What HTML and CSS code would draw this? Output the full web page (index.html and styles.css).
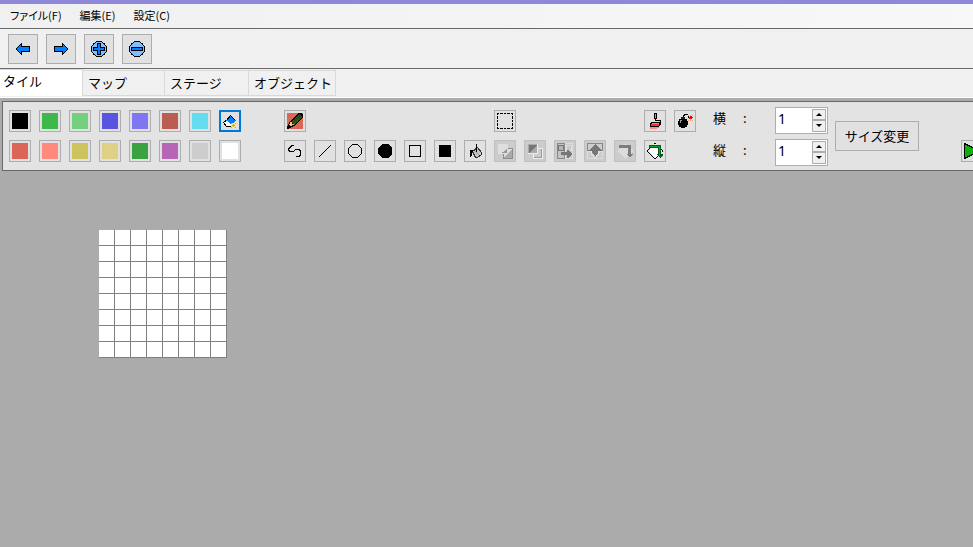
FILE: index.html
```
<!DOCTYPE html>
<html lang="ja">
<head>
    <meta charset="UTF-8">
    <meta name="viewport" content="width=device-width, initial-scale=1.0">
    <title>タイル</title>
    <link rel="stylesheet" href="styles.css">
</head>
<body>
    <nav class="menu-bar">
        <button class="menu-item">ファイル(F)</button>
        <button class="menu-item">編集(E)</button>
        <button class="menu-item">設定(C)</button>
    </nav>

    <div class="toolbar">
        <button class="main-btn" aria-label="戻る">
            <svg class="icon" viewBox="0 0 16 16"><path d="M1.5 7.5L6.5 2.5V5.5H14.5V10.5H6.5V13.5L1.5 8.5Z" fill="#0080ff" stroke="#000"/></svg>
        </button>
        <button class="main-btn" aria-label="進む">
            <svg class="icon" viewBox="0 0 16 16"><path d="M14.5 7.5L9.5 2.5V5.5H1.5V10.5H9.5V13.5L14.5 8.5Z" fill="#0080ff" stroke="#000"/></svg>
        </button>
        <button class="main-btn" aria-label="拡大">
            <svg class="icon" viewBox="0 0 16 16"><circle cx="8" cy="8" r="7.5" fill="#80bfff" stroke="#000"/><path d="M6.5 2.5H9.5V6.5H13.5V9.5H9.5V13.5H6.5V9.5H2.5V6.5H6.5Z" fill="#0080ff" stroke="#000"/></svg>
        </button>
        <button class="main-btn" aria-label="縮小">
            <svg class="icon" viewBox="0 0 16 16"><circle cx="8" cy="8" r="7.5" fill="#80bfff" stroke="#000"/><path d="M2.5 6.5H13.5V9.5H2.5Z" fill="#0080ff" stroke="#000"/></svg>
        </button>
    </div>

    <div class="tabs" role="tablist">
        <button class="tab active" role="tab">タイル</button>
        <button class="tab" role="tab">マップ</button>
        <button class="tab" role="tab">ステージ</button>
        <button class="tab" role="tab">オブジェクト</button>
    </div>

    <main class="tab-content">
        <div class="panel">
            <div class="palette">
                <button class="tool-btn" aria-label="黒"><span class="swatch black"></span></button>
                <button class="tool-btn" aria-label="緑"><span class="swatch green"></span></button>
                <button class="tool-btn" aria-label="薄緑"><span class="swatch light-green"></span></button>
                <button class="tool-btn" aria-label="青"><span class="swatch blue"></span></button>
                <button class="tool-btn" aria-label="薄青"><span class="swatch light-blue"></span></button>
                <button class="tool-btn" aria-label="暗い赤"><span class="swatch dark-red"></span></button>
                <button class="tool-btn" aria-label="水色"><span class="swatch cyan"></span></button>
                <button class="tool-btn selected" aria-label="消しゴム">
                    <svg class="icon" viewBox="0 0 16 16">
                        <path d="M1.5 9.5L5.5 6.5L10.5 12.5L8.5 13.5H4.5Z" fill="#fff" stroke="#000"/>
                        <path d="M8.5 2.5L13.5 7.5L9.5 12.5L4.5 7.5Z" fill="#0080ff"/>
                        <path d="M4.5 7.5L8.5 2.5L13.5 7.5" fill="none" stroke="#000"/>
                        <path d="M9 10H14V15H9Z" fill="#ffe96b"/>
                        <path d="M9 10h1v1h-1zM13 10h1v1h-1zM9 14h1v1h-1zM13 14h1v1h-1zM11 11h1v3h-1zM10 12h3v1h-3z" fill="#ff9a00"/>
                    </svg>
                </button>
                <button class="tool-btn" aria-label="赤"><span class="swatch red"></span></button>
                <button class="tool-btn" aria-label="薄赤"><span class="swatch light-red"></span></button>
                <button class="tool-btn" aria-label="黄"><span class="swatch yellow"></span></button>
                <button class="tool-btn" aria-label="薄黄"><span class="swatch light-yellow"></span></button>
                <button class="tool-btn" aria-label="暗い緑"><span class="swatch dark-green"></span></button>
                <button class="tool-btn" aria-label="紫"><span class="swatch magenta"></span></button>
                <button class="tool-btn" aria-label="灰"><span class="swatch gray"></span></button>
                <button class="tool-btn" aria-label="白"><span class="swatch white"></span></button>
            </div>

            <div class="tools">
                <div class="tool-row">
                    <button class="tool-btn" aria-label="ペン">
                        <svg class="icon" viewBox="0 0 16 16">
                            <path d="M0 0H16V16H0Z" fill="#db665a"/>
                            <path d="M11 0H15V1H16V5H15V6H14V7H13V8H12V9H11V10H10V11H9V12H8V13H6V14H4V15H2V16H0V13H1V11H2V9H3V8H4V7H5V6H6V5H7V4H8V3H9V2H10V1H11Z" fill="#000"/>
                            <path d="M4 9L12 1L15 4L7 12Z" fill="#264d10"/>
                            <path d="M5 9L12 2M7 11L14 4" fill="none" stroke="#3c6a1c" stroke-dasharray="1 1"/>
                            <path d="M3 9H5V11H7V12H5V13H3V12H2V11H3Z" fill="#ffb98c"/>
                        </svg>
                    </button>
                    <button class="tool-btn select-tool" aria-label="選択">
                        <svg class="icon" viewBox="0 0 16 16"><path d="M0 .5H16M0 15.5H16M.5 0V16M15.5 0V16" fill="none" stroke="#000" stroke-dasharray="2 1 3 1 2 1 3 1 2"/></svg>
                    </button>
                    <button class="tool-btn stamp-tool" aria-label="ローラー">
                        <svg class="icon" viewBox="0 0 16 16">
                            <path d="M7 0H10V6H7Z" fill="#000"/>
                            <path d="M8 1H9V5H8Z" fill="#ff8c1a"/>
                            <path d="M8.5 6V7.5H13.5V10.5H12" fill="none" stroke="#000"/>
                            <path d="M3 14H12V15H10V16H3Z" fill="#ff8c8c"/>
                            <path d="M4 9H13V10H14V12H13V13H12V14H3V10H4Z" fill="#000"/>
                            <path d="M5 10H12V11H5Z" fill="#ff8080"/>
                            <path d="M4 11H12V13H4Z" fill="#ff2c2c"/>
                        </svg>
                    </button>
                    <button class="tool-btn" aria-label="爆弾">
                        <svg class="icon" viewBox="0 0 16 16">
                            <circle cx="6" cy="10" r="5" fill="#000"/>
                            <path d="M4 4H8V6H4Z" fill="#222"/>
                            <path d="M3 7H5V8H4V10H3Z" fill="#999"/>
                            <path d="M6.5 4V2.5L8.5 1.5L11 2V4H12" fill="none" stroke="#000"/>
                            <path d="M11 2h1v1h-1zM15 2h1v1h-1zM11 7h1v1h-1zM15 7h1v1h-1zM13 2h1v6h-1z" fill="#ff9c6b"/>
                            <path d="M12 4H13V3H15V4H16V5H15V6H12Z" fill="#f00"/>
                        </svg>
                    </button>
                </div>
                <div class="tool-row">
                    <button class="tool-btn" aria-label="自由線">
                        <svg class="icon" viewBox="0 0 16 16"><path d="M7 2.5H4.5L3.5 4.5L1.5 5.5V7.5L3.5 8.5H6.5L8.5 6.5H12.5L13.5 8.5V11.5L12.5 13.5H9" fill="none" stroke="#000"/></svg>
                    </button>
                    <button class="tool-btn" aria-label="直線">
                        <svg class="icon" viewBox="0 0 16 16"><path d="M2 14L14 2" stroke="#000"/></svg>
                    </button>
                    <button class="tool-btn" aria-label="円">
                        <svg class="icon" viewBox="0 0 16 16"><path d="M5.5 1.5H10.5L14.5 5.5V10.5L10.5 14.5H5.5L1.5 10.5V5.5Z" fill="none" stroke="#000"/></svg>
                    </button>
                    <button class="tool-btn" aria-label="塗り円">
                        <svg class="icon" viewBox="0 0 16 16"><path d="M5 1H11L15 5V11L11 15H5L1 11V5Z" fill="#000"/></svg>
                    </button>
                    <button class="tool-btn" aria-label="四角">
                        <svg class="icon" viewBox="0 0 16 16"><path d="M2.5 2.5H13.5V13.5H2.5Z" fill="none" stroke="#000"/></svg>
                    </button>
                    <button class="tool-btn" aria-label="塗り四角">
                        <svg class="icon" viewBox="0 0 16 16"><path d="M2 2H14V14H2Z" fill="#000"/></svg>
                    </button>
                    <button class="tool-btn" aria-label="塗りつぶし">
                        <svg class="icon" viewBox="0 0 16 16">
                            <path d="M5.5 8.5L10.5 4.5L14.5 9.5V11.5L10.5 14.5H8.5Z" fill="#c4c4c4" stroke="#333"/>
                            <path d="M8 8L12 12" stroke="#999"/>
                            <path d="M9 1H10V9H9ZM3 7H6V9H5V13H4V14H3Z" fill="#000"/>
                        </svg>
                    </button>
                    <button class="tool-btn" aria-label="前面へ" disabled>
                        <svg class="icon" viewBox="0 0 16 16">
                            <path d="M6.5 5.5H15.5V15.5H6.5Z" fill="#ddd" stroke="#8c8c8c"/>
                            <path d="M15 6V15H7Z" fill="#aaa"/>
                            <path d="M1 1H11V11H1Z" fill="#dedede"/>
                            <path d="M10 5V10H3L7 9Z" fill="#999"/>
                        </svg>
                    </button>
                    <button class="tool-btn" aria-label="背面へ" disabled>
                        <svg class="icon" viewBox="0 0 16 16">
                            <path d="M6.5 5.5H15.5V15.5H6.5Z" fill="#ccc" stroke="#eee"/>
                            <path d="M14.5 6V14.5H7" fill="none" stroke="#999"/>
                            <path d="M1 1H10V10H1Z" fill="#aaa"/>
                            <path d="M2 2H10L2 10Z" fill="#777"/>
                            <path d="M1 10.5H10.5V1" fill="none" stroke="#eee"/>
                        </svg>
                    </button>
                    <button class="tool-btn" aria-label="左右反転" disabled>
                        <svg class="icon" viewBox="0 0 16 16">
                            <path d="M.5 .5H7.5V15.5H.5Z" fill="#c4c4c4" stroke="#888"/>
                            <path d="M8.5 .5H15.5V15.5H8.5Z" fill="#c9c9c9" stroke="#ddd"/>
                            <circle cx="4" cy="5" r="3" fill="#b4b4b4" stroke="#777"/>
                            <circle cx="12" cy="5" r="3" fill="none" stroke="#ddd"/>
                            <path d="M4 9H10V7H11L15 11L11 15H10V12H4Z" fill="#777"/>
                        </svg>
                    </button>
                    <button class="tool-btn" aria-label="上下反転" disabled>
                        <svg class="icon" viewBox="0 0 16 16">
                            <path d="M.5 .5H15.5V7.5H.5Z" fill="#ccc" stroke="#888"/>
                            <path d="M.5 8.5H15.5V15.5H.5Z" fill="#ccc" stroke="#ddd"/>
                            <path d="M3 9H13L8 15Z" fill="#bbb" stroke="#e2e2e2"/>
                            <path d="M8 1L15 8H11V10L8 13L5 10V8H1Z" fill="#777"/>
                        </svg>
                    </button>
                    <button class="tool-btn" aria-label="右回転" disabled>
                        <svg class="icon" viewBox="0 0 16 16">
                            <path d="M8 0L16 8L8 16L0 8Z" fill="#dcdcdc"/>
                            <path d="M2 2H14V11H16L13 15L10 11H11V5H2Z" fill="#7d7d7d"/>
                        </svg>
                    </button>
                    <button class="tool-btn" aria-label="回転">
                        <svg class="icon" viewBox="0 0 16 16">
                            <path d="M8 1L15 8L8 15L1 8Z" fill="#fff"/>
                            <path d="M7 0h2v1h-2zM5 2h1v1h-1zM3 4h1v1h-1zM2 5h1v1h-1zM1 6h1v1h-1zM0 7h1v2h-1zM1 9h1v1h-1zM2 10h1v1h-1zM3 11h1v1h-1zM4 12h1v1h-1zM5 13h1v1h-1zM6 14h1v1h-1zM7 15h2v1h-2zM9 14h1v1h-1zM10 13h1v1h-1zM14 6h1v1h-1zM15 7h1v2h-1z" fill="#000"/>
                            <path d="M2 2H13L14 3V11H16V12L13 15L10 12V11H11V5H2Z" fill="#075c1b"/>
                            <path d="M3 3H13V13H12V4H3Z" fill="#00a51f"/>
                        </svg>
                    </button>
                </div>
            </div>

            <div class="size-form">
                <label for="size-x">横</label><span>:</span>
                <div class="spin-box">
                    <input type="number" id="size-x" value="1" min="1">
                    <div class="spin-buttons">
                        <button class="spin-btn up" aria-label="横を増やす"></button>
                        <button class="spin-btn down" aria-label="横を減らす"></button>
                    </div>
                </div>
                <label for="size-y">縦</label><span>:</span>
                <div class="spin-box">
                    <input type="number" id="size-y" value="1" min="1">
                    <div class="spin-buttons">
                        <button class="spin-btn up" aria-label="縦を増やす"></button>
                        <button class="spin-btn down" aria-label="縦を減らす"></button>
                    </div>
                </div>
            </div>

            <button class="resize-btn">サイズ変更</button>

            <button class="tool-btn play-btn" aria-label="再生">
                <svg class="icon" viewBox="0 0 16 16"><path d="M.5 .5L14.5 7.5V8.5L.5 15.5Z" fill="#0cb00c" stroke="#000"/></svg>
            </button>
        </div>

        <div class="canvas">
            <div class="tile-grid"></div>
        </div>
    </main>
</body>
</html>
```
FILE: styles.css
```
* {
    box-sizing: border-box;
}

body {
    display: flex;
    flex-direction: column;
    min-height: 100vh;
    margin: 0;
    border-top: 4px solid #8f88d8;
    background-color: #f0f0f0;
    color: #000;
    font-family: "Noto Sans CJK JP", sans-serif;
    font-size: 13px;
    overflow: hidden;
}

button, input {
    padding: 0;
    font: inherit;
    color: inherit;
}

.icon {
    display: block;
    width: 16px;
    height: 16px;
    shape-rendering: crispEdges;
}

.menu-bar {
    display: flex;
    gap: 18px;
    height: 25px;
    padding: 0 10px;
    border-bottom: 1px solid #696969;
    background: linear-gradient(to right, #f0f0f0, #f8f8f8);
}

.menu-item {
    padding-bottom: 2px;
    border: none;
    background: none;
    font-size: 11px;
    font-feature-settings: "palt";
}

.toolbar {
    display: flex;
    gap: 8px;
    height: 40px;
    padding: 5px 8px;
    border-bottom: 1px solid #696969;
}

.main-btn, .tool-btn {
    display: flex;
    align-items: center;
    justify-content: center;
    border: 1px solid #adadad;
    background-color: #e1e1e1;
}

.main-btn {
    width: 30px;
    height: 30px;
}

.tool-btn {
    flex-shrink: 0;
    width: 22px;
    height: 22px;
}

.tool-btn.selected {
    border: 2px solid #0078d7;
}

.tool-btn:disabled {
    border-color: #bfbfbf;
    background-color: #cccccc;
}

.tabs {
    display: flex;
    align-items: flex-end;
    height: 29px;
    padding-bottom: 1px;
    border-bottom: 1px solid #fff;
}

.tab {
    height: 26px;
    padding: 0 3px 2px 5px;
    border: 1px solid #d9d9d9;
    border-left: none;
    text-align: left;
    background-color: #f0f0f0;
}

.tab:nth-child(2) {
    min-width: 82px;
}

.tab:nth-child(3) {
    min-width: 84px;
}

.tab.active {
    align-self: stretch;
    min-width: 83px;
    height: auto;
    padding: 0 3px 6px;
    border-bottom: none;
    background-color: #fff;
}

.tab-content {
    display: flex;
    flex: 1;
    flex-direction: column;
    padding: 3px 0 0 2px;
    background-color: #ababab;
}

.panel {
    display: flex;
    align-items: center;
    height: 70px;
    padding: 0 6px;
    border: 1px solid #696969;
    border-right: none;
    background-color: #e3e3e3;
}

.palette {
    display: grid;
    flex-shrink: 0;
    grid-template-columns: repeat(8, 22px);
    gap: 8px;
}

.swatch {
    width: 16px;
    height: 16px;
}

.black { background-color: #000000; }
.green { background-color: #3eb849; }
.light-green { background-color: #74d07d; }
.blue { background-color: #5955e0; }
.light-blue { background-color: #8076f1; }
.dark-red { background-color: #b95e51; }
.cyan { background-color: #65dbef; }
.red { background-color: #db6559; }
.light-red { background-color: #ff897d; }
.yellow { background-color: #ccc35e; }
.light-yellow { background-color: #ded087; }
.dark-green { background-color: #3aa241; }
.magenta { background-color: #b766b5; }
.gray { background-color: #cccccc; }
.white { background-color: #ffffff; }

.tools {
    display: flex;
    flex-shrink: 0;
    flex-direction: column;
    gap: 8px;
    margin-left: 43px;
}

.tool-row {
    display: grid;
    grid-template-columns: repeat(14, 22px);
    gap: 8px;
}

.select-tool {
    grid-column: 8;
}

.stamp-tool {
    grid-column: 13;
}

.size-form {
    display: grid;
    flex-shrink: 0;
    grid-template-columns: 30px 32px 53px;
    row-gap: 5px;
    align-items: center;
    margin-left: 17px;
}

.size-form label,
.size-form span {
    padding-bottom: 6px;
}

.spin-box {
    display: flex;
    height: 27px;
    padding: 1px;
    border: 1px solid #abadb3;
    background-color: #fff;
}

.spin-box input {
    flex: 1;
    min-width: 0;
    padding: 0 0 4px 1px;
    border: none;
    outline: none;
    background: none;
    font-family: "Noto Sans", "Noto Sans CJK JP", sans-serif;
    font-size: 14px;
    appearance: textfield;
}

.spin-box input::-webkit-inner-spin-button {
    appearance: none;
}

.spin-buttons {
    display: flex;
    flex-direction: column;
    width: 14px;
}

.spin-btn {
    display: flex;
    flex: 1;
    align-items: center;
    justify-content: center;
    border: 1px solid #adadad;
    background-color: #f0f0f0;
}

.spin-btn::before {
    content: "";
    border: 3px solid transparent;
}

.spin-btn.up::before {
    border-top: none;
    border-bottom-color: #000;
}

.spin-btn.down::before {
    border-bottom: none;
    border-top-color: #000;
}

.resize-btn {
    flex-shrink: 0;
    width: 84px;
    height: 30px;
    margin-left: 7px;
    padding-bottom: 2px;
    border: 1px solid #adadad;
    background-color: #e1e1e1;
}

.play-btn {
    align-self: flex-end;
    margin: 0 0 8px 42px;
}

.canvas {
    flex: 1;
    padding: 59px 97px;
}

/* 8x8 cells of 16px, line on the right and bottom edge of each */
.tile-grid {
    width: 128px;
    height: 128px;
    background-color: #fff;
    background-image:
        linear-gradient(to right, transparent 15px, #808080 15px),
        linear-gradient(to bottom, transparent 15px, #808080 15px);
    background-size: 16px 16px;
}
```
